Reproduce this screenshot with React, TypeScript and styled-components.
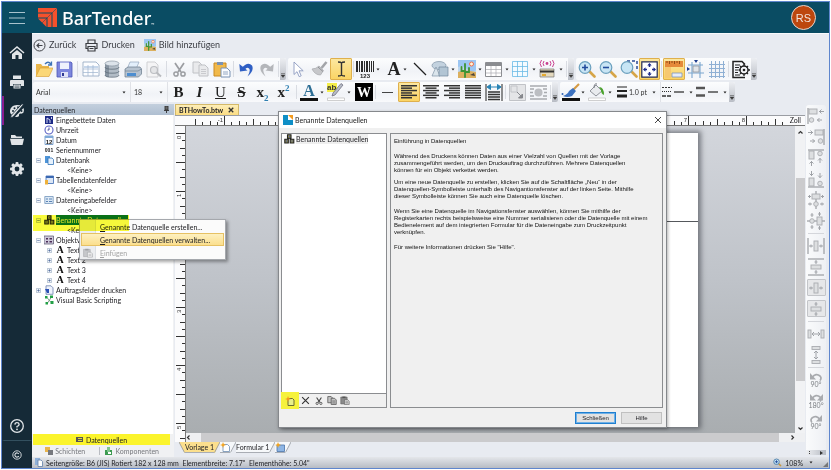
import React from "react";
import styled, { createGlobalStyle, css } from "styled-components";

const Global = createGlobalStyle`
  * { box-sizing: border-box; }
  body { margin: 0; background: #fff; }
  body, button, select { font-family: Lato, "Open Sans", sans-serif; }
  button { border: 0; padding: 0; margin: 0; background: none; color: inherit; font-size: inherit; }
  p, h1, h2, ul { margin: 0; padding: 0; font-weight: normal; }
  svg { display: block; flex: none; }
`;

/* ---------- shell ---------- */

const Frame = styled.div`
  display: flex;
  flex-direction: column;
  min-height: calc(100vh - 2px);
  margin: 1px;
  border: 1px solid #5f86cd;
  background: #e8ebf1;
  color: #1c1c20;
  font-size: 7px;
  line-height: 10px;
  overflow: hidden;
`;
const Header = styled.header`
  display: flex;
  align-items: center;
  height: 31px;
  padding: 0 13px 0 7px;
  background: #0a4c63;
`;
const MenuButton = styled.button`
  display: flex;
  padding: 0;
  margin-right: 13px;
`;
const Brand = styled.div`
  display: flex;
  align-items: center;
  gap: 5px;
  flex: 1;
  color: #fff;
  font: 500 18px/24px "Noto Sans", sans-serif;
  small { font-size: 4px; align-self: flex-end; line-height: 10px; margin-left: -5px; }
`;
const Avatar = styled.button`
  width: 25px;
  height: 25px;
  border: 1px solid #e3d5cd;
  border-radius: 50%;
  background: #bd470e;
  color: #f3e4dc;
  font: 11px/22px "Liberation Sans", sans-serif;
`;
const Body = styled.div`
  display: flex;
  flex: 1;
`;
const Sidebar = styled.nav`
  display: flex;
  flex-direction: column;
  width: 30px;
  padding-top: 5px;
  background: #152a37;
`;
const SideButton = styled.button<{ $active?: boolean; $last?: boolean }>`
  display: flex;
  align-items: center;
  justify-content: center;
  height: ${(p) => (p.$last ? 28 : 29)}px;
  border-left: 2px solid ${(p) => (p.$active ? "#8a1d8f" : "transparent")};
  border-right: 2px solid transparent;
  border-top: ${(p) => (p.$last ? "1px solid #33505f" : "0")};
  color: #e1e5e8;
`;
const Spacer = styled.span`
  flex: 1;
`;
const Work = styled.div`
  display: flex;
  flex-direction: column;
  flex: 1;
  min-width: 0;
`;

/* ---------- tool bars ---------- */

const Actions = styled.div`
  display: flex;
  align-items: center;
  gap: 9px;
  height: 25px;
  padding: 0 1px 2px;
  border-top: 1px solid #f8f9fb;
`;
const Action = styled.button`
  display: flex;
  align-items: center;
  gap: 3px;
  color: #3d3f45;
  font-size: 9px;
  line-height: 12px;
`;
const ToolRow = styled.div<{ $h: number }>`
  display: flex;
  gap: 2px;
  height: ${(p) => p.$h}px;
  margin-bottom: 2px;
  padding-left: 1px;
`;
const Strip = styled.div`
  display: flex;
  background: linear-gradient(#fcfdfe, #f1f3f7 60%, #f8f9fb);
  border-radius: 2px;
`;
const Tool = styled.button<{ $on?: boolean; $w?: number }>`
  display: flex;
  align-items: center;
  justify-content: center;
  width: ${(p) => p.$w ?? 21}px;
  ${(p) =>
    p.$on &&
    css`
      background: linear-gradient(#fbe7a0, #fbd464);
      border: 1px solid #dfb04c;
      border-radius: 1px;
    `}
`;
const DropTool = styled(Tool)`
  justify-content: space-between;
  padding: 0 2px 0 1px;
`;
const Glyph = styled.span<{ $bold?: boolean; $italic?: boolean; $line?: string; $size?: number }>`
  color: #222;
  font: ${(p) => (p.$italic ? "italic " : "")}${(p) => (p.$bold ? 700 : 400)} ${(p) => p.$size ?? 15}px/18px "Liberation Serif", serif;
  text-decoration: ${(p) => p.$line ?? "none"};
  text-decoration-thickness: 1px;
  sub, sup { font-size: 9px; line-height: 0; color: #2f7fb0; }
`;
const Sep = styled.i<{ $w?: number }>`
  width: ${(p) => p.$w ?? 5}px;
  margin: 3px 0;
  background: linear-gradient(#d9dce2, #d9dce2) center / 1px 100% no-repeat;
`;
const Grip = styled.button`
  display: flex;
  align-items: flex-end;
  justify-content: center;
  width: 6px;
  padding-bottom: 2px;
  border-radius: 0 2px 2px 0;
  background: linear-gradient(#eceef2, #b9bdc5);
`;
const Picker = styled.label<{ $w: number }>`
  display: flex;
  align-items: center;
  gap: 2px;
  width: ${(p) => p.$w}px;
  padding-left: 3px;
  padding-right: 4px;
  border-right: 1px solid #e0e2e7;
  select {
    flex: 1;
    min-width: 0;
    border: 0;
    padding: 0;
    appearance: none;
    background: none;
    color: #333;
    font-size: 7px;
  }
`;

/* ---------- source panel ---------- */

const Main = styled.main`
  display: flex;
  flex: 1;
`;
const Panel = styled.aside`
  display: flex;
  flex-direction: column;
  width: 142px;
  background: #f0f1f3;
`;
const PanelTitle = styled.h2`
  display: flex;
  align-items: center;
  justify-content: space-between;
  height: 11px;
  padding: 0 5px 0 2px;
  background: linear-gradient(#c3cfdd, #afbfd1);
  font-size: 7px;
  line-height: 10px;
`;
const Tree = styled.ul`
  position: relative;
  flex: 1;
  margin-right: 1px;
  background: #fff;
  list-style: none;
`;
const Row = styled.li<{ $depth: number }>`
  display: flex;
  align-items: center;
  position: relative;
  height: 10px;
  padding-left: ${(p) => 4 + p.$depth * 11}px;
  white-space: nowrap;
`;
const Expander = styled.button<{ $empty?: boolean }>`
  display: flex;
  width: 5px;
  height: 5px;
  margin-right: 3px;
  visibility: ${(p) => (p.$empty ? "hidden" : "visible")};
`;
const RowIcon = styled.span`
  display: flex;
  justify-content: center;
  width: 10px;
  margin-right: 2px;
`;
const Selected = styled.span`
  background: #0a7362;
  color: #e9e9a8;
`;
const Marker = styled.span`
  position: absolute;
  z-index: 3;
  left: 1px;
  top: 0;
  width: 96px;
  height: 16px;
  background: #f9fb3c;
  mix-blend-mode: multiply;
  pointer-events: none;
`;
const ContextMenu = styled.div`
  position: absolute;
  z-index: 2;
  left: 47px;
  top: 4px;
  width: 147px;
  padding: 0 1px;
  border: 1px solid #a5a8ad;
  background: linear-gradient(90deg, #eceef0 15px, #dcdfe3 15px, #dcdfe3 16px, #fbfbfb 16px);
  box-shadow: 2px 2px 3px rgba(0, 0, 0, 0.35);
`;
const MenuItem = styled.button<{ $hot?: boolean; $off?: boolean }>`
  display: flex;
  align-items: center;
  width: 100%;
  height: 13px;
  border: 1px solid ${(p) => (p.$hot ? "#e6c164" : "transparent")};
  background: ${(p) => (p.$hot ? "linear-gradient(#fdf0c0, #fbdf8d)" : "none")};
  color: ${(p) => (p.$off ? "#a3a3a3" : "#1c1c20")};
  span { display: flex; width: 18px; padding-left: 1px; }
`;
const PanelTab = styled.button`
  display: flex;
  align-items: center;
  justify-content: center;
  gap: 2px;
  height: 11px;
  margin: 0 4px 0 1px;
  background: #fbf42c;
`;
const PanelTabs = styled.div`
  display: grid;
  grid-template-columns: 1fr 1fr;
  height: 12px;
  padding: 2px 9px 2px 0;
  button { display: flex; align-items: center; justify-content: center; gap: 2px; color: #77797e; }
  button + button { border-left: 1px solid #b9bcc2; }
`;

/* ---------- document ---------- */

const Doc = styled.section`
  position: relative;
  display: flex;
  flex-direction: column;
  flex: 1;
  min-width: 0;
  padding-left: 1px;
`;
const DocTabs = styled.div`
  display: flex;
  height: 12px;
  border-bottom: 1px solid #9a9da3;
`;
const DocTab = styled.button`
  display: flex;
  align-items: center;
  gap: 5px;
  padding: 0 4px 0 3px;
  border: 1px solid #d3b96a;
  border-bottom: 0;
  background: linear-gradient(#fdeeb9, #fbdc82);
  font-weight: 700;
`;
const Stage = styled.div`
  display: grid;
  grid-template-columns: 11px 1fr 10px;
  grid-template-rows: 10px 1fr 9px;
  flex: 1;
`;
const TopRuler = styled.div`
  display: flex;
  grid-column: 1 / 4;
  overflow: hidden;
  background: #fbfbfc;
  border-bottom: 1px solid #777;
  svg { flex: 1; min-width: 0; overflow: hidden; }
`;
const SideRuler = styled.div`
  grid-row: 2 / 4;
  overflow: hidden;
  background: #fbfbfc;
  border-right: 1px solid #777;
  position: relative;
  svg { position: absolute; }
`;
const Canvas = styled.div`
  position: relative;
  overflow: hidden;
  background: linear-gradient(#d3d6dc, #bfc3c9 50%, #a9adb0);
`;
const Sheet = styled.div`
  position: absolute;
  left: 96px;
  top: 7px;
  width: 416px;
  height: 294px;
  background: #fff;
  box-shadow: 1px 0 5px 2px rgba(60, 64, 70, 0.6);
  &::after {
    content: "";
    display: block;
    height: 88px;
    border-bottom: 1px solid #55585c;
  }
`;
const VScroll = styled.div`
  display: flex;
  flex-direction: column;
  align-items: center;
  padding: 4px 0 2px;
  background: #f1f2f4;
`;
const VThumb = styled.i`
  width: 9px;
  flex: 203;
  background: #cbcbcd;
`;
const Gap = styled.i<{ $n: number }>`
  flex: ${(p) => p.$n};
`;
const HScroll = styled.div`
  display: flex;
  align-items: center;
  grid-column: 2 / 4;
  background: #eff0f2;
`;
const HThumb = styled.i`
  flex: 1;
  height: 9px;
  background: #cbcbcd;
`;
const ScrollButton = styled.button<{ $w: number }>`
  display: flex;
  align-items: center;
  justify-content: ${(p) => (p.$w > 20 ? "center" : "flex-start")};
  width: ${(p) => p.$w}px;
  height: 9px;
`;
const SheetTabs = styled.div`
  display: flex;
  height: 15px;
  padding: 0 4px 4px;
`;
const SheetTab = styled.button<{ $on?: boolean }>`
  display: flex;
  align-items: center;
  border-bottom: 1px solid #a9adb4;
  background: ${(p) => (p.$on ? "#fbdf8d" : "#f6f8fa")};
`;
const ObjectBar = styled.div`
  display: flex;
  flex-direction: column;
  align-items: center;
  width: 20px;
  margin: 1px 3px 2px 1px;
  border-radius: 3px;
  background: linear-gradient(90deg, #fafbfc, #eef0f4);
`;
const ObjectTool = styled.button<{ $boxed?: boolean }>`
  display: flex;
  flex-direction: column;
  align-items: center;
  justify-content: center;
  width: 19px;
  height: ${(p) => (p.$boxed ? 17 : 21)}px;
  margin: ${(p) => (p.$boxed ? 2 : 0)}px 0;
  border: ${(p) => (p.$boxed ? "1px solid #c3c5c9" : "0")};
  border-radius: 1px;
  background: ${(p) => (p.$boxed ? "#e6e7e9" : "none")};
  color: #7d8085;
  font-size: 7px;
  line-height: 7px;
`;
const ObjectSep = styled.i`
  width: 16px;
  height: 4px;
  background: linear-gradient(#d4d6db, #d4d6db) center / 100% 1px no-repeat;
`;
const ObjectGrip = styled.button`
  display: flex;
  align-items: center;
  justify-content: space-between;
  align-self: stretch;
  height: 5px;
  padding: 0 2px;
  background: linear-gradient(90deg, #eceef1, #b6bac2);
`;
const Status = styled.footer`
  display: flex;
  align-items: center;
  gap: 3px;
  height: 11px;
  padding: 0 1px 0 3px;
  background: linear-gradient(#e4e6ea, #b7bcc4);
  white-space: pre;
`;
const ZoomLevel = styled.button`
  display: flex;
  align-items: center;
  gap: 3px;
  margin-right: 7px;
  svg:last-child { margin-left: 3px; }
`;

/* ---------- dialog ---------- */

const Dialog = styled.section`
  position: absolute;
  z-index: 1;
  left: 104px;
  top: 7px;
  width: 389px;
  display: flex;
  flex-direction: column;
  border: 1px solid #85888c;
  background: #f0f0f0;
  box-shadow: 1px 1px 3px rgba(0, 0, 0, 0.3);
`;
const DialogTitle = styled.header`
  display: flex;
  align-items: center;
  gap: 2px;
  height: 16px;
  padding: 0 4px;
  background: #fff;
  h1 { flex: 1; font-size: 7px; line-height: 10px; color: #222; }
`;
const DialogBody = styled.div`
  display: grid;
  grid-template-columns: 106px 1fr;
  gap: 3px;
  height: 275px;
  margin: 5px 3px 0 2px;
`;
const ListBox = styled.div`
  display: flex;
  flex-direction: column;
  border: 1px solid #8b8d90;
  background: #fff;
`;
const ListItem = styled.div`
  display: flex;
  align-items: flex-start;
  gap: 1px;
  flex: 1;
  padding: 0 2px;
  span { background: #efefef; line-height: 10px; }
`;
const ListTools = styled.div`
  display: flex;
  height: 14px;
  border-top: 1px solid #8b8d90;
  background: #f0f0f0;
`;
const ListTool = styled.button<{ $mark?: boolean }>`
  display: flex;
  align-items: center;
  justify-content: center;
  width: ${(p) => (p.$mark ? 18 : 13)}px;
  margin: ${(p) => (p.$mark ? "-2px 0 -2px -1px" : "0")};
  background: ${(p) => (p.$mark ? "#f6f23c" : "none")};
`;
const Info = styled.article`
  padding: 4px 3px;
  border: 1px solid #8b8d90;
  font: 6px/7px "Liberation Sans", sans-serif;
  color: #111;
  white-space: nowrap;
  p + p { margin-top: 5px; }
  p.wide { margin-top: 8px; }
`;
const DialogActions = styled.div`
  display: flex;
  justify-content: flex-end;
  gap: 5px;
  padding: 4px 4px 3px;
`;
const DialogButton = styled.button<{ $focus?: boolean }>`
  width: 41px;
  height: 12px;
  border: ${(p) => (p.$focus ? "1px solid #1f7fd0" : "1px solid #c0c0c0")};
  box-shadow: ${(p) => (p.$focus ? "inset 0 0 0 1px #6fb0e6" : "none")};
  background: #e2e2e2;
  font: 6px/8px "Liberation Sans", sans-serif;
`;

/* ---------- drawings ---------- */

type IconProps = { w: number; h: number; box?: string; children: React.ReactNode };
const Icon = ({ w, h, box, children }: IconProps) => (
  <svg width={w} height={h} viewBox={box ?? `0 0 ${w} ${h}`} fill="none" aria-hidden="true">
    {children}
  </svg>
);
const Caret = () => (
  <Icon w={4} h={3}>
    <path d="M.5 .5h3L2 2.500z" fill="#222" />
  </Icon>
);
const GripMark = () => (
  <Icon w={4} h={5}>
    <path d="M0 .5h4M0 2h4L2 4.500z" stroke="#444" strokeWidth=".5" fill="#333" />
  </Icon>
);
const GripButton = () => (
  <Grip aria-label="Symbolleistenoptionen">
    <GripMark />
  </Grip>
);

const HomeIcon = () => (
  <Icon w={16} h={16}>
    <path d="M1 8l7-6 7 6" stroke="currentColor" strokeWidth="1.600" />
    <path d="M3 9l5-4 5 4v5h-3.500v-4h-3v4H3z" fill="currentColor" />
  </Icon>
);
const SidePrinter = () => (
  <Icon w={16} h={16}>
    <path d="M4 1.500h8V5H4zM2 6h12q1 0 1 1v5h-3v-2H4v2H1V7q0-1 1-1zM4.500 10.500h7v4h-7z" fill="currentColor" />
    <path d="M5.500 12h5M5.500 13.300h5" stroke="#152a37" strokeWidth=".6" />
  </Icon>
);
const DesignIcon = () => (
  <Icon w={16} h={16}>
    <path d="M8 2C4 2 1 4.800 1 8.200 1 11 3 12.500 5 12l8-9.200Q11 2 8 2z" fill="currentColor" />
    <path d="M14.500 5Q15.500 7 14.500 9.500 13.500 11 11 10.500 9.500 11 10 13q-1 1.500-4 .800z" fill="currentColor" />
    <path d="M14.500 1.500L4 14l-2.500 1 .7-2.500L13 .8z" fill="currentColor" stroke="#152a37" strokeWidth=".8" />
    <circle cx="4" cy="8" r="1" fill="#152a37" />
    <circle cx="5.500" cy="5.200" r="1" fill="#152a37" />
    <circle cx="9" cy="4.200" r=".9" fill="#152a37" />
    <circle cx="12.500" cy="8" r="1" fill="#152a37" />
  </Icon>
);
const SideFolder = () => (
  <Icon w={16} h={16}>
    <path d="M2 3h4l1.500 1.500H13V6H2z" fill="currentColor" />
    <path d="M1 6.800h14L13.500 13h-11z" fill="currentColor" />
  </Icon>
);
const GearIcon = () => (
  <Icon w={16} h={16}>
    <g fill="currentColor">
      {[0, 45, 90, 135].map((a) => (
        <rect key={a} x="6.500" y="1" width="3" height="14" rx="1" transform={`rotate(${a} 8 8)`} />
      ))}
      <circle cx="8" cy="8" r="5.200" />
    </g>
    <circle cx="8" cy="8" r="2.400" fill="#152a37" />
  </Icon>
);
const HelpIcon = () => (
  <Icon w={16} h={16}>
    <circle cx="8" cy="8" r="6.300" stroke="currentColor" strokeWidth="1.300" />
    <path d="M5.900 6.600Q6 4.600 8 4.600T10.100 6.400Q10.100 7.500 8 8.500V9.600" stroke="currentColor" strokeWidth="1.300" />
    <circle cx="8" cy="11.300" r=".9" fill="currentColor" />
  </Icon>
);
const CopyrightIcon = () => (
  <Icon w={10} h={10}>
    <circle cx="5" cy="5" r="4.200" stroke="currentColor" strokeWidth=".9" />
    <path d="M6.800 3.900A2.100 2.100 0 1 0 6.800 6.100" stroke="currentColor" strokeWidth="1.100" />
  </Icon>
);
const Logo = () => (
  <Icon w={19} h={19}>
    <path d="M0 0h19v19h-4.500V4.500H0z" fill="#f4512c" />
    <path d="M0 5.500h13.500V19H9.500V9.500H0z" fill="#f4512c" />
    <path d="M0 10.500h8.500V19z" fill="#f4512c" />
    <path d="M0 19L19 0" stroke="#0a4c63" strokeWidth=".5" />
  </Icon>
);
const PictureArt = ({ w, h }: { w: number; h: number }) => (
  <Icon w={w} h={h} box="0 0 18 18">
    <path d="M0 0h18v12H0z" fill="#9cc6f3" />
    <path d="M0 7q5-2 9 2t9 1v3H0z" fill="#bcd6ee" />
    <path d="M0 12q6-3 18 0v6H0z" fill="#dcb05e" />
    <circle cx="13.500" cy="4" r="2" fill="#fff3d8" stroke="#f0704c" />
    <path d="M7 17V4M7 11H3.500V7M7 12h4V8" stroke="#3e9434" strokeWidth="1.800" strokeLinecap="round" />
    <path d="M12 15l4-2 1 3z" fill="#4b443c" />
  </Icon>
);
const OpenIcon = () => (
  <Icon w={18} h={18}>
    <path d="M1 16V4h5l1.500 2H14v3z" fill="#e9b64a" />
    <path d="M5 8h13l-4 8.500H1z" fill="#fbd777" stroke="#d79a2b" strokeWidth=".6" />
    <path d="M10 4q3-3.500 6 0M16.500 1.500V5H13" stroke="#3d74b8" strokeWidth="1.300" />
  </Icon>
);
const SaveIcon = () => (
  <Icon w={17} h={17}>
    <path d="M1 1h14l1 1v14H1z" fill="#7d86dd" stroke="#4b56b6" strokeWidth=".8" />
    <path d="M4 1.500h9V8H4z" fill="#eef1fc" />
    <path d="M5 11h7v5H5z" fill="#dfe2f6" />
    <path d="M6 12h2v3H6z" fill="#2f3a94" />
  </Icon>
);
const SheetGrid = () => (
  <Icon w={18} h={18}>
    <path d="M1 2h13l3 3v11H1z" fill="#fcfdff" stroke="#8fa5bf" strokeWidth=".8" />
    <path d="M2 6h14v2H2z" fill="#c6d7eb" />
    <path d="M6 5v11M11 5v11M1 9h15M1 12.500h15" stroke="#9db3cf" strokeWidth=".7" />
  </Icon>
);
const DatabaseIcon = () => (
  <Icon w={16} h={18}>
    <path d="M1 3.500v11q0 2.500 7 2.500t7-2.500v-11z" fill="#b2bcc6" />
    <path d="M1 3.500v11q0 2.500 4 2.500V5z" fill="#8794a1" />
    <ellipse cx="8" cy="3.500" rx="7" ry="2.500" fill="#dce3ea" stroke="#7e8b98" strokeWidth=".6" />
    <path d="M1 7q0 2.200 7 2.200T15 7M1 11q0 2.200 7 2.200T15 11M1 15q0 2.200 7 2.200t7-2.200" stroke="#5e6c79" strokeWidth=".8" />
  </Icon>
);
const PrintIcon = () => (
  <Icon w={18} h={17}>
    <path d="M6 1h9l-2.500 6h-9z" fill="#e3effb" stroke="#93a6bd" strokeWidth=".7" />
    <path d="M1 8l3-2h12l1.500 2v5l-3 3H1z" fill="#b7c3d0" stroke="#67788a" strokeWidth=".7" />
    <path d="M1 10h13l3.500-2" stroke="#67788a" strokeWidth=".6" />
    <path d="M3 12h9v3H3z" fill="#4d8ed0" />
  </Icon>
);
const PreviewIcon = () => (
  <Icon w={17} h={17}>
    <path d="M2 1h8l3 3v12H2z" fill="#f4f4f5" stroke="#cfd0d3" />
    <circle cx="9" cy="9" r="3.500" fill="#e4e5e7" stroke="#bdbfc3" strokeWidth="1.200" />
    <path d="M11.500 11.500l4.500 4" stroke="#b9bbbf" strokeWidth="2" />
  </Icon>
);
const CutIcon = ({ s = 15, dark }: { s?: number; dark?: boolean }) => (
  <Icon w={s} h={s} box="0 0 15 15">
    <path d="M3 1l6 9M12 1l-6 9" stroke={dark ? "#444" : "#9b9da1"} strokeWidth={dark ? 2 : 1.700} />
    <circle cx="4" cy="12" r="2.100" stroke={dark ? "#444" : "#9b9da1"} strokeWidth="1.500" />
    <circle cx="11" cy="12" r="2.100" stroke={dark ? "#444" : "#9b9da1"} strokeWidth="1.500" />
  </Icon>
);
const CopyIcon = ({ w = 17, h = 16, dark }: { w?: number; h?: number; dark?: boolean }) => (
  <Icon w={w} h={h} box="0 0 17 16">
    <g fill={dark ? "#c3c3c3" : "#e9eaec"} stroke={dark ? "#555" : "#c0c2c6"} strokeWidth={dark ? 1.400 : 1}>
      <path d="M1 1h6l3 3v8H1z" />
      <path d="M7 4h6l3 3v8H7z" />
    </g>
    <path d="M9 8.500h5M9 10.500h5M9 12.500h5" stroke={dark ? "#555" : "#c0c2c6"} strokeWidth=".8" />
  </Icon>
);
const PasteIcon = ({ w = 18, h = 17, tone = "color" }: { w?: number; h?: number; tone?: "color" | "gray" | "dark" }) => {
  const c = {
    color: ["#f1b94a", "#c98a22", "#fafcff", "#7992b4"],
    gray: ["#c6c8cb", "#a5a7aa", "#eeeeef", "#a0a2a5"],
    dark: ["#8b8b8b", "#555", "#d5d5d5", "#555"],
  }[tone];
  return (
    <Icon w={w} h={h} box="0 0 18 17">
      <path d="M1 2h12v13H1z" fill={c[0]} stroke={c[1]} />
      <path d="M4 1h6v3H4z" fill={c[3]} />
      <path d="M8 7h6l3 3v6H8z" fill={c[2]} stroke={c[3]} />
      <path d="M10 11h5M10 13h5" stroke={c[3]} strokeWidth=".8" />
    </Icon>
  );
};
const UndoIcon = ({ redo }: { redo?: boolean }) => (
  <Icon w={14} h={15}>
    <g transform={redo ? "matrix(-1 0 0 1 14 0)" : undefined} fill={redo ? "#b4b6ba" : "#2f5fc4"}>
      <path d="M3 5.500Q9-1 13 3.500 15.500 8.500 8.500 14.500 12 8.500 10 6.500 8 4.500 5.500 8z" />
      <path d="M.3 2l.7 7.500 7.500-1z" />
    </g>
  </Icon>
);
const CursorIcon = () => (
  <Icon w={12} h={17}>
    <path d="M1 1v12.500l3-2.800 2.200 5 2-.9-2.200-5h4.200z" fill="#fff" stroke="#8c9ac0" strokeWidth=".9" />
  </Icon>
);
const BrushIcon = () => (
  <Icon w={17} h={16}>
    <path d="M15.500 1l-5 6" stroke="#a3a5a9" strokeWidth="2.600" />
    <path d="M8 5l4.500 4.500-3 4.500Q4 14 1 8q4 0 7-3z" fill="#c6c7ca" stroke="#a7a9ad" strokeWidth=".7" />
    <path d="M7 6l5 4.500" stroke="#8d8f93" />
  </Icon>
);
const IBeamIcon = () => (
  <Icon w={9} h={16}>
    <path d="M1 1q3 0 3.500 1Q5 1 8 1M1 15q3 0 3.500-1Q5 15 8 15M4.500 2v12" stroke="#333" strokeWidth="1.400" />
  </Icon>
);
const BarcodeIcon = () => (
  <Icon w={18} h={17}>
    {[[0, 2], [3, 1], [5, 2], [8, 1], [10, 2], [13, 1], [15, 1], [17, 1]].map(([x, w]) => (
      <rect key={x} x={x} y="0" width={w} height="11" fill="#2c2c2c" />
    ))}
    <text x="9" y="17" fontSize="6" fontWeight="700" textAnchor="middle" fill="#222" fontFamily="Liberation Sans, sans-serif">123</text>
  </Icon>
);
const LineIcon = () => (
  <Icon w={14} h={14}>
    <path d="M1 1l12 12" stroke="#222" strokeWidth="1.300" />
  </Icon>
);
const ShapesIcon = () => (
  <Icon w={18} h={17}>
    <ellipse cx="8" cy="4.500" rx="7" ry="4" fill="#c3d2df" stroke="#7f94a6" strokeWidth=".7" />
    <path d="M5 6l4 9H1z" fill="#dbe5ec" stroke="#7f94a6" strokeWidth=".7" />
    <path d="M8 6h9v9H8z" fill="#b2c5d4" stroke="#70879b" strokeWidth=".7" />
  </Icon>
);
const TableIcon = () => (
  <Icon w={17} h={15}>
    <path d="M.5 .5h16v14H.5z" fill="#fff" stroke="#8c8e92" />
    <path d="M1 1h15v3H1z" fill="#8a8c90" />
    <path d="M6 4v10M11 4v10M1 7.500h15M1 11h15" stroke="#a9abaf" strokeWidth=".7" />
  </Icon>
);
const BlueGridIcon = () => (
  <Icon w={16} h={16}>
    <path d="M.5 .5h15v15H.5zM5.500 0v16M10.500 0v16M0 5.500h16M0 10.500h16" stroke="#6cbbe6" strokeWidth=".8" fill="#f4fbff" />
  </Icon>
);
const RfidIcon = () => (
  <Icon w={16} h={18}>
    <path d="M5 1Q3 3.500 5 6M2.500 0Q-.5 3.500 2.500 7M11 1q2 2.500 0 5M13.500 0q3 3.500 0 7" stroke="#c83f8e" strokeWidth="1" />
    <circle cx="8" cy="3.500" r="1.400" fill="#c83f8e" />
    <path d="M1 9h14v8H1z" fill="#e4d9be" stroke="#777" strokeWidth=".7" />
    <path d="M1 10.500h14v2H1z" fill="#333" />
    <path d="M3 14h4v2H3z" fill="#e3a930" />
  </Icon>
);
const Lens = ({ sign, area }: { sign?: string; area?: boolean }) => (
  <Icon w={18} h={18}>
    {area && <path d="M7 1h10v8" stroke="#2c4b94" strokeWidth="1.500" strokeDasharray="3 2" />}
    <path d="M11 11l5.500 5.500" stroke="#d6a548" strokeWidth="2.600" strokeLinecap="round" />
    <circle cx="7" cy="7.500" r="5.800" fill="#c8e5f5" stroke="#6ba0be" strokeWidth="1.200" />
    {sign && <path d={sign} stroke="#234c9c" strokeWidth="1.600" />}
  </Icon>
);
const FitIcon = () => (
  <Icon w={17} h={17}>
    <path d="M.8 .8h15.400v15.400H.8z" fill="#fff" stroke="#222a55" strokeWidth="1.200" />
    <path d="M8.500 2l2.200 2.500H6.300zM8.500 15l2.200-2.500H6.300zM2 8.500l2.500-2.200v4.400zM15 8.500l-2.500-2.200v4.400z" fill="#1d2a8c" />
    <path d="M8.500 3v3M8.500 11v3M3 8.500h3M11 8.500h3" stroke="#1d2a8c" strokeWidth="1.500" />
  </Icon>
);
const RulersIcon = () => (
  <Icon w={18} h={18}>
    <path d="M0 1h18v6H0z" fill="#e58a3a" />
    <path d="M2 1v2M4.500 1v3M7 1v2M9.500 1v3M12 1v2M14.500 1v3" stroke="#7c3b0c" strokeWidth=".8" />
    <path d="M0 7h6v11H0z" fill="#f6c870" />
    <path d="M7 13h10v4H7z" fill="#e6edf8" stroke="#7d95bd" strokeWidth=".8" />
  </Icon>
);
const CropIcon = () => (
  <Icon w={17} h={18}>
    <path d="M5 2v16M13 2v16M1 5h15M1 13h16" stroke="#7aa6cf" strokeWidth="1.100" />
    <path d="M6 6h6v6H6z" fill="#e1e4e8" stroke="#8f959d" strokeWidth=".8" />
    <path d="M0 7l3 2-3 2zM7 0h4L9 3z" fill="#1d3c8c" />
  </Icon>
);
const HashGridIcon = () => (
  <Icon w={16} h={17}>
    <path d="M2.500 0v17M6.500 0v17M10.500 0v17M14.500 0v17M0 3.500h16M0 7.500h16M0 11.500h16M0 15.500h16" stroke="#8fb0d4" />
  </Icon>
);
const DocGearIcon = () => (
  <Icon w={18} h={19}>
    <path d="M13 17.500H1V1.500h9l3 3" stroke="#222" strokeWidth="1.500" />
    <path d="M3 5h5M3 7.500h4M3 10h3M3 12.500h3M3 15h5" stroke="#222" strokeWidth="1.200" />
    <circle cx="12" cy="10" r="4" stroke="#222" strokeWidth="1.400" fill="#f4f5f8" />
    <circle cx="12" cy="10" r="1.300" fill="#222" />
    <path d="M12 4v2M12 14v2M6.500 10h2M16 10h2M8 6l1.500 1.500M16 6l-1.500 1.500M8 14l1.500-1.500M16 14l-1.500-1.500" stroke="#222" strokeWidth="1.300" />
  </Icon>
);
const FontColorIcon = () => (
  <Icon w={18} h={18}>
    <text x="9" y="13" fontSize="16" fontWeight="700" textAnchor="middle" fill="#2c6d94" fontFamily="Liberation Serif, serif">A</text>
    <path d="M0 15h18v3H0z" fill="#111" />
  </Icon>
);
const HighlightIcon = () => (
  <Icon w={18} h={18}>
    <path d="M0 0h10v9H0z" fill="#f4ee4a" />
    <text x="0" y="7" fontSize="8" fontWeight="700" fill="#333" fontFamily="Liberation Sans, sans-serif">ab</text>
    <path d="M16 2L8 12l-3 1 1-3 8-9.500z" fill="#b7bcc6" stroke="#667" strokeWidth=".7" />
    <path d="M.5 15h17v2.500H.5z" fill="#fff" stroke="#bbb" strokeWidth=".7" />
  </Icon>
);
const InvertIcon = () => (
  <Icon w={18} h={18}>
    <path d="M0 0h18v18H0z" fill="#000" />
    <text x="9" y="14" fontSize="14" fontWeight="700" textAnchor="middle" fill="#fff" fontFamily="Liberation Serif, serif">W</text>
  </Icon>
);
const Rule = ({ w, t = 1 }: { w: number; t?: number }) => (
  <Icon w={w} h={3}>
    <path d={`M0 1.500h${w}`} stroke="#444" strokeWidth={t} />
  </Icon>
);
const AlignIcon = ({ kind }: { kind: "l" | "c" | "r" | "j" }) => (
  <Icon w={16} h={14}>
    {[0, 1, 2, 3, 4, 5].map((i) => {
      const w = kind === "j" || i % 2 === 0 ? 16 : 11;
      const x = kind === "r" ? 16 - w : kind === "c" ? (16 - w) / 2 : 0;
      return <rect key={i} x={x} y={i * 2.400} width={w} height="1.500" fill="#333" />;
    })}
  </Icon>
);
const SpanIcon = () => (
  <Icon w={18} h={17}>
    <path d="M1 0v17M17 0v17" stroke="#222" strokeWidth="1" />
    <path d="M2 3l3.500-2.500v5zM16 3l-3.500-2.500v5zM5 3h8" fill="#2683b5" stroke="#2683b5" />
    <path d="M3 8h12M3 10.500h12M3 13h12M3 15.500h12" stroke="#333" strokeWidth="1.500" />
  </Icon>
);
const ResizeIcon = () => (
  <Icon w={17} h={17}>
    <path d="M.5 .5h16v16H.5z" fill="#e4e5e7" stroke="#c1c3c7" />
    <path d="M2 2h6v6H2z" stroke="#c2c4c8" />
    <path d="M8 8l4 4M13.500 10v4h-4z" stroke="#85878c" strokeWidth="1" fill="#85878c" />
  </Icon>
);
const WrapIcon = () => (
  <Icon w={17} h={15}>
    <path d="M0 1h17M0 4h4M13 4h4M0 7.500h3M14 7.500h3M0 11h4M13 11h4M0 14h17" stroke="#a8aaae" strokeWidth="1.500" />
    <circle cx="8.500" cy="7.500" r="4" fill="#bcbec2" />
  </Icon>
);
const PaintIcon = () => (
  <Icon w={19} h={18}>
    <path d="M18 1L11 8" stroke="#d59b45" strokeWidth="2.200" />
    <path d="M12 5l3 3-4 5q-5 2-9 0 5-2 6-5z" fill="#3d72c0" />
    <path d="M1 15h18v3H1z" fill="#111" />
    <circle cx="1.500" cy="11" r="1" fill="#2d61b5" />
  </Icon>
);
const BucketIcon = () => (
  <Icon w={18} h={18}>
    <path d="M8 2l6 6-6 5-6-5z" fill="#e9ebee" stroke="#777b83" strokeWidth=".8" />
    <path d="M6 5q0-5 3-4" stroke="#777b83" />
    <path d="M11 4q5 0 5 8-3-1-3-5z" fill="#4aa32c" />
    <path d="M.5 15h17v2.500H.5z" fill="#fff" stroke="#bbb" strokeWidth=".7" />
  </Icon>
);
const WeightIcon = () => (
  <Icon w={10} h={12}>
    <path d="M0 1h10" stroke="#222" strokeWidth="1" />
    <path d="M0 5h10" stroke="#222" strokeWidth="2" />
    <path d="M0 10h10" stroke="#222" strokeWidth="3" />
  </Icon>
);
const DashIcon = () => (
  <Icon w={22} h={12}>
    <path d="M0 1.500h10" stroke="#333" strokeWidth="1.200" strokeDasharray="2 1" />
    <path d="M0 5.500h10" stroke="#333" strokeWidth="1.200" strokeDasharray="1 1" />
    <path d="M0 10h10" stroke="#333" strokeWidth="1.500" strokeDasharray="4 1" />
    <path d="M12 6h10" stroke="#333" strokeWidth="1.300" />
  </Icon>
);
const DoubleIcon = () => (
  <Icon w={22} h={12}>
    <path d="M0 2h9M0 9.500h9" stroke="#555" strokeWidth="2.600" />
    <path d="M12 6h10" stroke="#333" strokeWidth="1.300" />
  </Icon>
);

const BackIcon = () => (
  <Icon w={13} h={13}>
    <circle cx="6.500" cy="6.500" r="5.500" stroke="#3f4146" />
    <path d="M9.500 6.500H4M6.200 4.300L4 6.500l2.200 2.200" stroke="#3f4146" strokeWidth="1.200" />
  </Icon>
);
const OutlinePrinter = () => (
  <Icon w={13} h={13}>
    <path d="M3 4V1h7v3M3 9.500H1V4.500h11v5h-2M3 7.500h7V12H3z" stroke="#3a3c41" strokeWidth="1.200" />
    <path d="M4.500 9.500h4" stroke="#3a3c41" />
  </Icon>
);

/* tree icons */
const TinyIcon = ({ children }: { children: React.ReactNode }) => (
  <Icon w={10} h={10}>{children}</Icon>
);
const EmbeddedIcon = () => (
  <TinyIcon>
    <path d="M1 1h8v8H1z" fill="#1c2a86" />
    <path d="M3 8V3l3 2v3M7.500 2v2" stroke="#e3e6fa" strokeWidth=".9" />
  </TinyIcon>
);
const ClockIcon = () => (
  <TinyIcon>
    <circle cx="5" cy="5" r="4" fill="#fff" stroke="#5b62c4" strokeWidth="1.100" />
    <path d="M5 2.500V5H3.500" stroke="#333a94" strokeWidth=".9" />
  </TinyIcon>
);
const DateIcon = () => (
  <TinyIcon>
    <path d="M1 1h8v8.500H1z" fill="#fff" stroke="#5f8dc2" strokeWidth=".8" />
    <path d="M1 1h8v2H1z" fill="#7fa9d8" />
    <text x="5" y="8.500" fontSize="6" fontWeight="700" textAnchor="middle" fill="#222" fontFamily="Liberation Sans, sans-serif">12</text>
  </TinyIcon>
);
const SerialIcon = () => (
  <TinyIcon>
    <text x="5" y="7" fontSize="5" fontWeight="700" textAnchor="middle" fill="#222" fontFamily="Liberation Sans, sans-serif">001</text>
  </TinyIcon>
);
const DbFilesIcon = () => (
  <TinyIcon>
    <path d="M1 1h5v7H1z" fill="#4f95d8" />
    <path d="M4 3h4l1.500 1.500v5H4z" fill="#e6f1fc" stroke="#3274b8" strokeWidth=".8" />
  </TinyIcon>
);
const TableFieldIcon = () => (
  <TinyIcon>
    <path d="M2 1h7.500v7.500H2z" fill="#dbe6f5" stroke="#3a68b2" strokeWidth=".8" />
    <path d="M2 1h7.500v2H2z" fill="#3a68b2" />
    <path d="M1 5h3v4.500H1z" fill="#efb13a" />
  </TinyIcon>
);
const FormIcon = () => (
  <TinyIcon>
    <path d="M.8 1.500h8.400v7H.8z" fill="#dce9f6" stroke="#7295bd" strokeWidth=".8" />
    <path d="M2 4h2M5 4h3M2 6.500h2M5 6.500h3" stroke="#5b83b3" strokeWidth="1.100" />
  </TinyIcon>
);
const CubesIcon = () => (
  <Icon w={11} h={10}>
    <path d="M3.500 .8h3.500v3.500H3.500zM.8 5.200h3.500v3.800H.8zM6.200 5.200h3.600v3.800H6.200z" fill="#8d8d55" stroke="#222" strokeWidth="1.100" />
    <path d="M2 7h1M7.500 7h1M5 2.500h1" stroke="#4a53c0" strokeWidth="1.200" />
  </Icon>
);
const ValuesIcon = () => (
  <TinyIcon>
    <path d="M0 1h9.500v8H0z" fill="#cdc9da" stroke="#54506a" strokeWidth=".7" />
    <path d="M2 3h2v1.500H2zM5.500 3h2.500v1.500H5.500zM2 6h2v1.500H2zM5.500 6h2.500v1.500H5.500z" fill="#4a2c56" />
  </TinyIcon>
);
const TextA = styled.b`
  color: #111;
  font: 700 10px/10px "Liberation Serif", serif;
`;
const JobIcon = () => (
  <TinyIcon>
    <path d="M2 .8h5l2 2v6.500H2z" fill="#eef2fc" stroke="#6a7fae" strokeWidth=".8" />
    <path d="M1 4h4v4H3z" fill="#2a50b4" />
  </TinyIcon>
);
const ScriptIcon = () => (
  <TinyIcon>
    <path d="M3 2.500l4 5M7.500 2l-4 6" stroke="#5c7a66" strokeWidth=".7" />
    <path d="M1 1h2.500v2.500H1zM6 .5h3V3H6zM1.500 7H4v2.500H1.500zM6.500 6h3v3h-3z" fill="#22a046" />
  </TinyIcon>
);
const Plus = ({ open }: { open?: boolean }) => (
  <Icon w={5} h={5}>
    <path d="M.4 .4h4.200v4.200H.4z" fill="#f2f5fa" stroke="#9fb0c4" strokeWidth=".7" />
    <path d={open ? "M1.200 2.500h2.600" : "M1.200 2.500h2.600M2.500 1.200v2.600"} stroke="#3f5d94" strokeWidth=".6" />
  </Icon>
);

const NewPage = ({ form }: { form?: boolean }) => (
  <Icon w={10} h={10}>
    {form ? <path d="M2 3h7.500v6.500H2z" fill="#8fb6e4" stroke="#4972a8" strokeWidth=".8" /> : <path d="M3 2.500h4.500l2 2v5H3z" fill="#fff" stroke="#7c98ba" strokeWidth=".9" />}
    <path d="M3 0l.8 2L6 3l-2.200.8L3 6l-.8-2.200L0 3l2.200-.8z" fill="#f6a41d" />
  </Icon>
);
const Slash = ({ on, flip }: { on?: boolean; flip?: boolean }) => (
  <Icon w={6} h={11}>
    <path d={flip ? "M0 0h6v11H5.500z" : "M0 0h6L1 11H0z"} fill={on ? "#fbdf8d" : "#f6f8fa"} />
    <path d={flip ? "M0 0l5.500 10.500" : "M6 0L.5 10.500"} stroke="#8f949c" strokeWidth=".8" />
  </Icon>
);
const Chevron = ({ d }: { d: "l" | "r" | "u" | "d" }) => (
  <Icon w={5} h={5}>
    <path
      d={{ l: "M3.500 .5l-2 2 2 2", r: "M1.500 .5l2 2-2 2", u: "M.5 3.500l2-2 2 2", d: "M.5 1.500l2 2 2-2" }[d]}
      stroke="#333"
      strokeWidth="1.200"
    />
  </Icon>
);
const CloseIcon = ({ s, t }: { s: number; t: number }) => (
  <Icon w={s} h={s} box="0 0 8 8">
    <path d="M1 1l6 6M7 1L1 7" stroke="#333" strokeWidth={t} />
  </Icon>
);

/* object bar drawings */
const G = "#a9acb0";
const arrow = (x: number, y: number, d: "l" | "r" | "u" | "d") =>
  ({
    l: `M${x + 5} ${y}h-5M${x + 2.500} ${y - 2}l-2 2 2 2`,
    r: `M${x} ${y}h5M${x + 2.500} ${y - 2}l2 2-2 2`,
    u: `M${x} ${y + 5}v-5M${x - 2} ${y + 2.500}l2-2 2 2`,
    d: `M${x} ${y}v5M${x - 2} ${y + 2.500}l2 2 2-2`,
  })[d];
const Obj = ({ lines, arrows, rects, dot }: { lines?: string; arrows?: string; rects: number[][]; dot?: number[] }) => (
  <Icon w={18} h={18}>
    {lines && <path d={lines} stroke="#888b90" strokeWidth="1" />}
    {rects.map((r, i) => (
      <rect key={i} x={r[0]} y={r[1]} width={r[2]} height={r[3]} fill="#dddfe1" stroke={G} strokeWidth=".9" />
    ))}
    {dot && <circle cx={dot[0]} cy={dot[1]} r="2.300" fill="#dddfe1" stroke={G} strokeWidth=".9" />}
    {arrows && <path d={arrows} stroke="#a0a3a8" strokeWidth="1" />}
  </Icon>
);
const TurnIcon = ({ kind }: { kind: "l" | "r" | "both" }) => (
  <Icon w={16} h={9}>
    <g transform={kind === "r" ? "matrix(-1 0 0 1 16 0)" : undefined}>
      <path d="M4 5.500q4-5 8-1.500 2 2 0 4.500" stroke="#a9abaf" strokeWidth="1.700" />
      <path d="M2 1v6.500h6z" fill="#a9abaf" />
      {kind === "both" && <path d="M15 1v6.500H9z" fill="#a9abaf" />}
    </g>
  </Icon>
);

/* ---------- rulers ---------- */

const INCH = 58;
const ticks = (from: number, to: number) => Array.from({ length: (to - from) * 8 + 1 }, (_, i) => from * 8 + i);

const RulerX = () => (
  <svg height="9">
    {ticks(-2, 30)
      .filter((i) => i > -13)
      .map((i) => {
        const x = 107 + Math.round((i * INCH) / 8);
        const h = i % 8 === 0 ? 9 : i % 4 === 0 ? 6 : i % 2 === 0 ? 4 : 3;
        return <path key={i} d={`M${x + 0.5} ${9 - h}v${h}`} stroke="#333" />;
      })}
    {[-1, 1, 2, 3, 4, 5, 6, 7, 8].map((n) => (
      <text key={n} x={106 + n * INCH} y="6" fontSize="6" textAnchor="end" fill="#333" fontFamily="Liberation Sans, sans-serif">
        {n}
      </text>
    ))}
  </svg>
);
const RulerY = () => (
  <svg width="10" height="100%">
    {ticks(0, 20).map((i) => {
      const y = 7 + Math.round((i * INCH) / 8);
      const h = i % 4 === 0 ? 9 : i % 2 === 0 ? 5 : 3;
      return <path key={i} d={`M${10 - h} ${y + 0.5}h${h}`} stroke="#333" />;
    })}
    {[0, 1, 2, 3, 4, 5].map((n) => (
      <text
        key={n}
        transform={`translate(6 ${13 + n * INCH}) rotate(-90)`}
        fontSize="6"
        fill="#333"
        fontFamily="Liberation Sans, sans-serif"
      >
        {n}
      </text>
    ))}
  </svg>
);
const RulerUnit = styled.span`
  padding: 0 4px 0 0;
  line-height: 9px;
`;

/* ---------- data ---------- */

type Node = { text: string; depth: number; icon?: React.ReactNode; open?: boolean; closed?: boolean; selected?: boolean };
const nodes: Node[] = [
  { text: "Eingebettete Daten", depth: 0, icon: <EmbeddedIcon /> },
  { text: "Uhrzeit", depth: 0, icon: <ClockIcon /> },
  { text: "Datum", depth: 0, icon: <DateIcon /> },
  { text: "Seriennummer", depth: 0, icon: <SerialIcon /> },
  { text: "Datenbank", depth: 0, icon: <DbFilesIcon />, open: true },
  { text: "<Keine>", depth: 1 },
  { text: "Tabellendatenfelder", depth: 0, icon: <TableFieldIcon />, open: true },
  { text: "<Keine>", depth: 1 },
  { text: "Dateneingabefelder", depth: 0, icon: <FormIcon />, open: true },
  { text: "<Keine>", depth: 1 },
  { text: "Benannte Datenquellen", depth: 0, icon: <CubesIcon />, open: true, selected: true },
  { text: "<Keine>", depth: 1 },
  { text: "Objektwerte", depth: 0, icon: <ValuesIcon />, open: true },
  { text: "Text 1", depth: 1, icon: <TextA>A</TextA>, closed: true },
  { text: "Text 2", depth: 1, icon: <TextA>A</TextA>, closed: true },
  { text: "Text 3", depth: 1, icon: <TextA>A</TextA>, closed: true },
  { text: "Text 4", depth: 1, icon: <TextA>A</TextA>, closed: true },
  { text: "Auftragsfelder drucken", depth: 0, icon: <JobIcon />, closed: true },
  { text: "Visual Basic Scripting", depth: 0, icon: <ScriptIcon /> },
];

const SourceMenu = () => (
  <ContextMenu role="menu">
    <MenuItem role="menuitem">
      <span />
      <div><u>G</u>enannte Datenquelle erstellen...</div>
    </MenuItem>
    <MenuItem role="menuitem" $hot>
      <span />
      <div><u>G</u>enannte Datenquellen verwalten...</div>
    </MenuItem>
    <MenuItem role="menuitem" $off>
      <span><PasteIcon w={10} h={10} tone="gray" /></span>
      <div><u>E</u>infügen</div>
    </MenuItem>
  </ContextMenu>
);

const SourceDialog = () => (
  <Dialog role="dialog" aria-labelledby="dialog-title">
    <DialogTitle>
      <Icon w={10} h={10}>
        <path d="M0 0h5v5h5v5H0z" fill="#0f8fc6" />
        <path d="M5 0l5 5V0z" fill="#f39a1d" />
      </Icon>
      <h1 id="dialog-title">Benannte Datenquellen</h1>
      <button aria-label="Schließen"><CloseIcon s={8} t={0.9} /></button>
    </DialogTitle>
    <DialogBody>
      <ListBox>
        <ListItem>
          <CubesIcon />
          <span>Benannte Datenquellen</span>
        </ListItem>
        <ListTools>
          <ListTool $mark aria-label="Neu">
            <Icon w={10} h={10}>
              <path d="M3 2.500h4.500l1.500 1.500v5.500H3z" fill="#e9f08a" stroke="#6b6d32" />
              <path d="M3 0l.8 2L6 3l-2.200.8L3 6l-.8-2.200L0 3l2.200-.8z" fill="#f59a1d" />
            </Icon>
          </ListTool>
          <ListTool aria-label="Löschen"><CloseIcon s={9} t={1} /></ListTool>
          <ListTool aria-label="Ausschneiden"><CutIcon s={8} dark /></ListTool>
          <ListTool aria-label="Kopieren"><CopyIcon w={10} h={9} dark /></ListTool>
          <ListTool aria-label="Einfügen"><PasteIcon w={10} h={9} tone="dark" /></ListTool>
        </ListTools>
      </ListBox>
      <Info>
        <p>Einführung in Datenquellen</p>
        <p className="wide">
          Während des Druckens können Daten aus einer Vielzahl von Quellen mit der Vorlage<br />
          zusammengeführt werden, um den Druckauftrag durchzuführen. Mehrere Datenquellen<br />
          können für ein Objekt verkettet werden.
        </p>
        <p>
          Um eine neue Datenquelle zu erstellen, klicken Sie auf die Schaltfläche „Neu“ in der<br />
          Datenquellen-Symbolleiste unterhalb des Navigantionsfenster auf der linken Seite. Mithilfe<br />
          dieser Symbolleiste können Sie auch eine Datenquelle löschen.
        </p>
        <p className="wide">
          Wenn Sie eine Datenquelle im Navigationsfenster auswählen, können Sie mithilfe der<br />
          Registerkarten rechts beispielsweise eine Nummer serialisieren oder die Datenquelle mit einem<br />
          Bedienelement auf dem integrierten Formular für die Dateneingabe zum Druckzeitpunkt<br />
          verknüpfen.
        </p>
        <p className="wide">Für weitere Informationen drücken Sie "Hilfe".</p>
      </Info>
    </DialogBody>
    <DialogActions>
      <DialogButton $focus>Schließen</DialogButton>
      <DialogButton>Hilfe</DialogButton>
    </DialogActions>
  </Dialog>
);

const StandardTools = () => (
  <ToolRow $h={22} role="toolbar">
    <Strip>
      <Tool aria-label="Öffnen"><OpenIcon /></Tool>
      <Tool aria-label="Speichern"><SaveIcon /></Tool>
      <Sep />
      <Tool aria-label="Seite einrichten"><SheetGrid /></Tool>
      <Tool aria-label="Datenbank"><DatabaseIcon /></Tool>
      <Tool aria-label="Drucken"><PrintIcon /></Tool>
      <Tool aria-label="Vorschau"><PreviewIcon /></Tool>
      <Sep />
      <Tool aria-label="Ausschneiden"><CutIcon /></Tool>
      <Tool aria-label="Kopieren"><CopyIcon /></Tool>
      <Tool aria-label="Einfügen"><PasteIcon /></Tool>
      <Sep $w={3} />
      <Tool aria-label="Rückgängig"><UndoIcon /></Tool>
      <Tool aria-label="Wiederholen"><UndoIcon redo /></Tool>
      <Sep $w={3} />
      <GripButton />
    </Strip>
    <Strip>
      <Tool aria-label="Auswählen"><CursorIcon /></Tool>
      <Tool aria-label="Format übertragen"><BrushIcon /></Tool>
      <Tool $on $w={22} aria-label="Textcursor"><IBeamIcon /></Tool>
      <Sep $w={3} />
      <DropTool $w={27} aria-label="Barcode"><BarcodeIcon /><Caret /></DropTool>
      <DropTool $w={27} aria-label="Text"><Glyph $bold $size={18}>&nbsp;A</Glyph><Caret /></DropTool>
      <Tool aria-label="Linie"><LineIcon /></Tool>
      <DropTool $w={27} aria-label="Form"><ShapesIcon /><Caret /></DropTool>
      <DropTool $w={27} aria-label="Bild"><PictureArt w={18} h={18} /><Caret /></DropTool>
      <DropTool $w={27} aria-label="Tabelle"><TableIcon /><Caret /></DropTool>
      <DropTool $w={27} aria-label="Raster"><BlueGridIcon /><Caret /></DropTool>
      <DropTool $w={27} aria-label="RFID"><RfidIcon /><Caret /></DropTool>
      <Sep $w={3} />
      <GripButton />
    </Strip>
    <Strip>
      <Tool aria-label="Vergrößern"><Lens sign="M4 7.500h6M7 4.500v6" /></Tool>
      <Tool aria-label="Verkleinern"><Lens sign="M4 7.500h6" /></Tool>
      <Tool aria-label="Bereich zoomen"><Lens area /></Tool>
      <Tool $on aria-label="Einpassen"><FitIcon /></Tool>
      <Sep $w={3} />
      <Tool $on $w={22} aria-label="Lineale"><RulersIcon /></Tool>
      <Tool aria-label="Hilfslinien"><CropIcon /></Tool>
      <Tool aria-label="Gitter"><HashGridIcon /></Tool>
      <Sep $w={3} />
      <Tool aria-label="Dokumentoptionen"><DocGearIcon /></Tool>
      <GripButton />
    </Strip>
  </ToolRow>
);

const FormatTools = () => (
  <ToolRow $h={20} role="toolbar">
    <Strip>
      <Picker $w={98}>
        <select aria-label="Schriftart"><option>Arial</option></select>
        <Caret />
      </Picker>
      <Picker $w={37}>
        <select aria-label="Schriftgröße"><option>18</option></select>
        <Caret />
      </Picker>
      <Tool aria-label="Fett"><Glyph $bold>B</Glyph></Tool>
      <Tool aria-label="Kursiv"><Glyph $italic $bold>I</Glyph></Tool>
      <Tool aria-label="Unterstrichen"><Glyph $line="underline">U</Glyph></Tool>
      <Tool aria-label="Durchgestrichen"><Glyph $line="line-through" $bold>S</Glyph></Tool>
      <Tool aria-label="Tiefgestellt"><Glyph $bold>x<sub>2</sub></Glyph></Tool>
      <Tool aria-label="Hochgestellt"><Glyph $bold>x<sup>2</sup></Glyph></Tool>
      <Sep />
      <DropTool $w={27} aria-label="Schriftfarbe"><FontColorIcon /><Caret /></DropTool>
      <DropTool $w={27} aria-label="Hervorheben"><HighlightIcon /><Caret /></DropTool>
      <Tool aria-label="Weiß auf Schwarz"><InvertIcon /></Tool>
      <Sep $w={3} />
      <Tool aria-label="Trennlinie"><Rule w={11} /></Tool>
      <Tool $on $w={22} aria-label="Linksbündig"><AlignIcon kind="l" /></Tool>
      <Tool aria-label="Zentriert"><AlignIcon kind="c" /></Tool>
      <Tool aria-label="Rechtsbündig"><AlignIcon kind="r" /></Tool>
      <Tool aria-label="Blocksatz"><AlignIcon kind="j" /></Tool>
      <Tool aria-label="Einpassen"><SpanIcon /></Tool>
      <Sep $w={3} />
      <Tool aria-label="Größe"><ResizeIcon /></Tool>
      <Tool aria-label="Umbruch"><WrapIcon /></Tool>
      <Sep $w={3} />
      <GripButton />
    </Strip>
    <Strip>
      <DropTool $w={27} aria-label="Linienfarbe"><PaintIcon /><Caret /></DropTool>
      <DropTool $w={27} aria-label="Füllfarbe"><BucketIcon /><Caret /></DropTool>
      <Picker $w={47}>
        <WeightIcon />
        <select aria-label="Linienstärke"><option>1.0 pt</option></select>
        <Caret />
      </Picker>
      <DropTool $w={34} aria-label="Strichart"><DashIcon /><Caret /></DropTool>
      <DropTool $w={34} aria-label="Linientyp"><DoubleIcon /><Caret /></DropTool>
      <GripButton />
    </Strip>
  </ToolRow>
);

const ObjectTools = () => (
  <ObjectBar role="toolbar">
    <ObjectTool aria-label="Links ausrichten"><Obj lines="M1 1v16" rects={[[2, 2, 8, 5]]} dot={[4.500, 13]} arrows={arrow(12, 4.500, "l") + arrow(10, 13, "l")} /></ObjectTool>
    <ObjectTool aria-label="Rechts ausrichten"><Obj lines="M17 1v16" rects={[[8, 2, 8, 5]]} dot={[13.500, 13]} arrows={arrow(1, 4.500, "r") + arrow(3, 13, "r")} /></ObjectTool>
    <ObjectTool aria-label="Oben ausrichten"><Obj lines="M1 1h16" rects={[[2, 2, 5, 8]]} dot={[13, 4.500]} arrows={arrow(4.500, 12, "u") + arrow(13, 9, "u")} /></ObjectTool>
    <ObjectTool aria-label="Unten ausrichten"><Obj lines="M1 17h16" rects={[[2, 8, 5, 8]]} dot={[13, 13.500]} arrows={arrow(4.500, 1, "d") + arrow(13, 3, "d")} /></ObjectTool>
    <ObjectTool aria-label="Vertikal zentrieren"><Obj lines="M9 0v18" rects={[[5, 3, 8, 5]]} dot={[9, 13]} arrows={"M1 5.500h3M14 5.500h3M1 13h4M13 13h4M2.500 4v3M15.500 4v3M3 11.500v3M15 11.500v3"} /></ObjectTool>
    <ObjectTool aria-label="Horizontal zentrieren"><Obj lines="M0 9h18" rects={[[10, 5, 5, 8]]} dot={[5, 9]} arrows={"M5 1v4M12.500 0v4M5 13v4M12.500 14v4M3.500 3h3M11 2h3M3.500 15h3M11 16h3"} /></ObjectTool>
    <ObjectSep />
    <ObjectTool aria-label="Gleiche Breite"><Obj lines="M1 1v16M17 1v16" rects={[[7, 4, 4, 10]]} arrows={"M2 9h4M12 9h4M4 7.500v3M14 7.500v3"} /></ObjectTool>
    <ObjectTool aria-label="Gleiche Höhe"><Obj lines="M1 1h16M1 17h16" rects={[[4, 7, 10, 4]]} arrows={"M9 2v4M9 12v4M7.500 4h3M7.500 14h3"} /></ObjectTool>
    <ObjectTool $boxed aria-label="Horizontal auf Seite"><Obj rects={[[7, 4, 4, 10]]} arrows={"M2 9h4M12 9h4M4 7.500v3M14 7.500v3"} /></ObjectTool>
    <ObjectTool $boxed aria-label="Vertikal auf Seite"><Obj rects={[[4, 7, 10, 4]]} arrows={"M9 2v4M9 12v4M7.500 4h3M7.500 14h3"} /></ObjectTool>
    <ObjectSep />
    <ObjectTool aria-label="Horizontal verteilen"><Obj rects={[[1, 5, 3, 8], [14, 5, 3, 8]]} arrows={"M5 9h8M7 7l-2 2 2 2M11 7l2 2-2 2"} /></ObjectTool>
    <ObjectTool aria-label="Vertikal verteilen"><Obj rects={[[5, 0.500, 8, 3], [5, 14.500, 8, 3]]} arrows={"M9 5v8M7 7l2-2 2 2M7 11l2 2 2-2"} /></ObjectTool>
    <ObjectSep />
    <ObjectTool><TurnIcon kind="l" />90°</ObjectTool>
    <ObjectTool><TurnIcon kind="both" />180°</ObjectTool>
    <ObjectTool><TurnIcon kind="r" />90°</ObjectTool>
    <Spacer />
    <ObjectGrip aria-label="Symbolleistenoptionen">
      <Icon w={3} h={4}><path d="M1.500 0v4" stroke="#444" strokeDasharray="1 1" /></Icon>
      <Icon w={4} h={4}><path d="M0 0l3 2-3 2z" fill="#333" /></Icon>
    </ObjectGrip>
  </ObjectBar>
);

export default function App() {
  return (
    <>
      <Global />
      <Frame>
        <Header>
          <MenuButton aria-label="Menü">
            <Icon w={16} h={14}>
              <path d="M0 1.500h16M0 7h16M0 12.500h16" stroke="#a9c3cd" strokeWidth="1.200" />
            </Icon>
          </MenuButton>
          <Brand><Logo />BarTender<small>™</small></Brand>
          <Avatar>RS</Avatar>
        </Header>
        <Body>
          <Sidebar>
            <SideButton aria-label="Start"><HomeIcon /></SideButton>
            <SideButton aria-label="Drucken"><SidePrinter /></SideButton>
            <SideButton $active aria-label="Entwerfen"><DesignIcon /></SideButton>
            <SideButton aria-label="Dateien"><SideFolder /></SideButton>
            <SideButton aria-label="Einstellungen"><GearIcon /></SideButton>
            <Spacer />
            <SideButton aria-label="Hilfe"><HelpIcon /></SideButton>
            <SideButton $last aria-label="Copyright"><CopyrightIcon /></SideButton>
          </Sidebar>
          <Work>
            <Actions>
              <Action><BackIcon />Zurück</Action>
              <Action><OutlinePrinter />Drucken</Action>
              <Action><PictureArt w={12} h={12} />Bild hinzufügen</Action>
            </Actions>
            <StandardTools />
            <FormatTools />
            <Main>
              <Panel>
                <PanelTitle>
                  Datenquellen
                  <Icon w={5} h={7}><path d="M1 0h3v4H1zM0 4.500h5M2.500 4.500V7" stroke="#333" fill="#666" strokeWidth=".9" /></Icon>
                </PanelTitle>
                <Tree>
                  {nodes.map((n, i) => (
                    <Row key={i} $depth={n.depth}>
                      <Expander $empty={!n.open && !n.closed} aria-label={n.text}><Plus open={n.open} /></Expander>
                      <RowIcon>{n.icon}</RowIcon>
                      {n.selected ? <Selected>{n.text}</Selected> : n.text}
                      {n.selected && <><SourceMenu /><Marker /></>}
                    </Row>
                  ))}
                </Tree>
                <PanelTab>
                  <Icon w={8} h={7}><path d="M0 1h7v5H0z" fill="#555" /><path d="M2 2.500h4M2 4.500h4" stroke="#e9e23a" strokeWidth=".9" /></Icon>
                  Datenquellen
                </PanelTab>
                <PanelTabs>
                  <button>
                    <Icon w={8} h={8}><path d="M0 0h5v5H0z" fill="#e8b34b" /><path d="M3 3h5v5H3z" fill="#77797e" /></Icon>
                    Schichten
                  </button>
                  <button>
                    <Icon w={8} h={8}><path d="M0 3h7v5H0z" fill="#3b9a50" /><path d="M2 0h3v5H2z" fill="#7ec48c" /><path d="M3 5h3v2H3z" fill="#fff" /></Icon>
                    Komponenten
                  </button>
                </PanelTabs>
              </Panel>
              <Doc>
                <DocTabs>
                  <DocTab>BTHowTo.btw <CloseIcon s={6} t={1.800} /></DocTab>
                </DocTabs>
                <Stage>
                  <TopRuler><RulerX /><RulerUnit>Zoll</RulerUnit></TopRuler>
                  <SideRuler><RulerY /></SideRuler>
                  <Canvas><Sheet /></Canvas>
                  <VScroll>
                    <Chevron d="u" />
                    <Gap $n={43} />
                    <VThumb />
                    <Gap $n={45} />
                    <Chevron d="d" />
                  </VScroll>
                  <HScroll>
                    <ScrollButton $w={15} aria-label="Nach links"><Chevron d="l" /></ScrollButton>
                    <HThumb />
                    <ScrollButton $w={26} aria-label="Nach rechts"><Chevron d="r" /></ScrollButton>
                  </HScroll>
                </Stage>
                <SheetTabs>
                  <Slash flip on />
                  <SheetTab $on>Vorlage 1</SheetTab>
                  <Slash on />
                  <SheetTab aria-label="Neue Vorlage"><NewPage /></SheetTab>
                  <Slash />
                  <SheetTab>Formular 1</SheetTab>
                  <Slash />
                  <SheetTab aria-label="Neues Formular"><NewPage form /></SheetTab>
                  <Slash />
                </SheetTabs>
                <SourceDialog />
              </Doc>
              <ObjectTools />
            </Main>
            <Status>
              <Icon w={8} h={9}><path d="M0 0h5v7H0z" fill="#8fb0d8" /><path d="M3 2h3l1.500 1.500v5H3z" fill="#fff" stroke="#5f7fa8" strokeWidth=".8" /></Icon>
              {'Seitengröße: B6 (JIS) Rotiert 182 x 128 mm  Elementbreite: 7.17"  Elementhöhe: 5.04"'}
              <Spacer />
              <ZoomLevel>
                <Icon w={9} h={9} box="0 0 18 18">
                  <path d="M11 11l5 5" stroke="#c8973c" strokeWidth="3" />
                  <circle cx="7" cy="7.500" r="5.500" fill="#c8e5f5" stroke="#4a7ca8" strokeWidth="1.800" />
                  <path d="M4 7.500h6M7 4.500v6" stroke="#234c9c" strokeWidth="1.800" />
                </Icon>
                108%
                <Caret />
              </ZoomLevel>
              <Icon w={5} h={8}><path d="M5 3v5H0z" fill="#777" /></Icon>
            </Status>
          </Work>
        </Body>
      </Frame>
    </>
  );
}
